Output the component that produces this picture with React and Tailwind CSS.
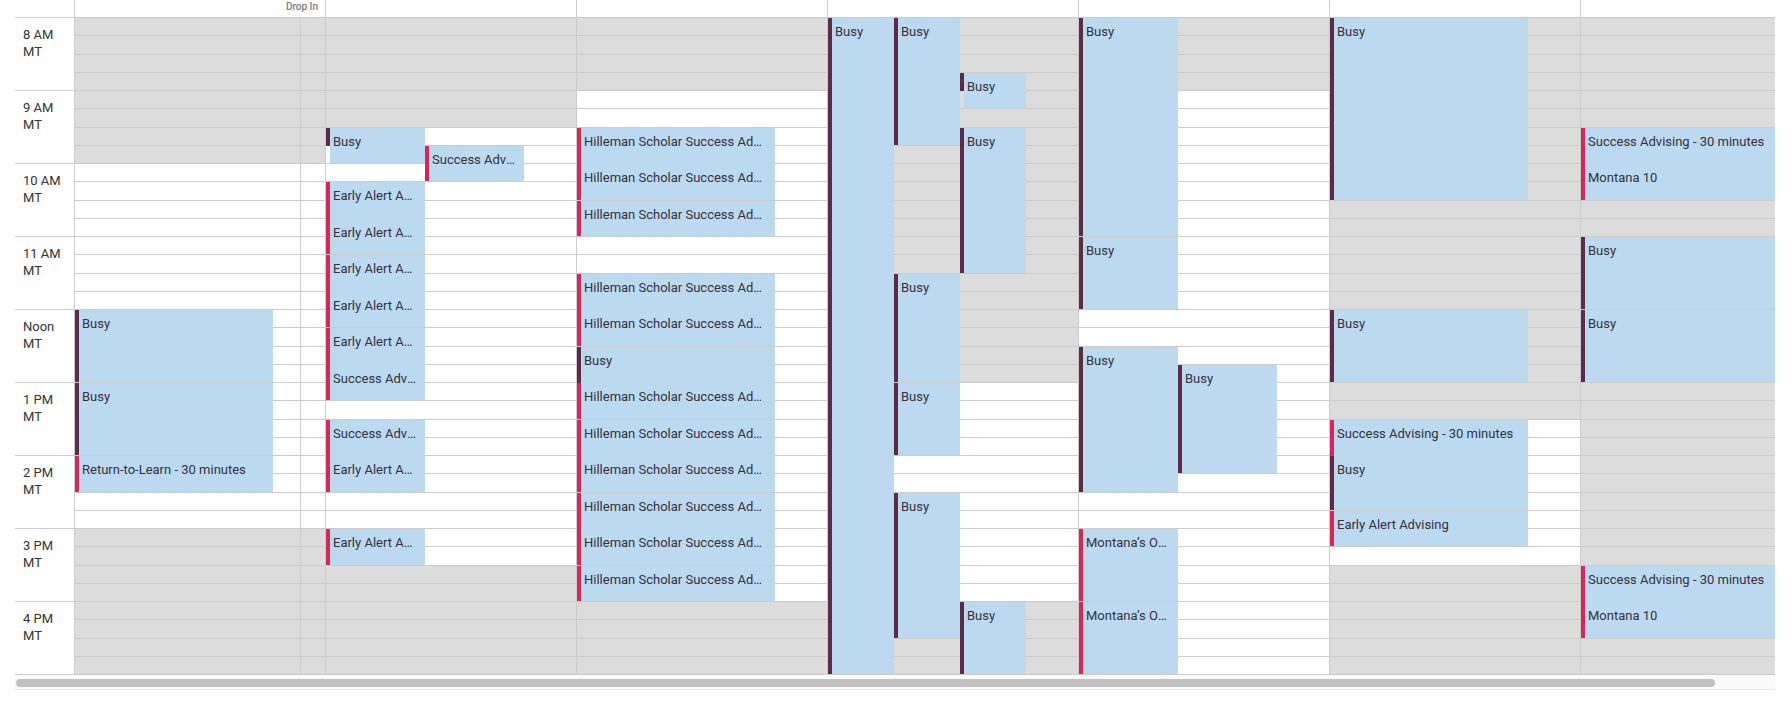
import React from 'react'

const SLOT = 18.25
const EVENT_W = 198
const SLOT_COUNT = 36

const hours = ['8 AM', '9 AM', '10 AM', '11 AM', 'Noon', '1 PM', '2 PM', '3 PM', '4 PM']

const HILLEMAN = 'Hilleman Scholar Success Advising'
const EARLY = 'Early Alert Advising'
const SUCCESS = 'Success Advising - 30 minutes'
const MONTANA_OH = 'Montana’s Office Hours'

// a segment is one appointment inside a block; n = length in 15 min slots
const busy = (n, bar) => ({ title: 'Busy', kind: 'busy', n, bar })
const appt = (title, n) => ({ title, kind: 'appt', n })
const ev = (s, e, segs, lane = 0, lanes = 1) => ({ s, e, segs, lane, lanes })

const days = [
  {
    gray: [[0, 8], [28, 36]],
    dropIn: true,
    events: [
      ev(16, 20, [busy(4)]),
      ev(20, 24, [busy(4)]),
      ev(24, 26, [appt('Return-to-Learn - 30 minutes', 2)]),
    ],
  },
  {
    gray: [[0, 6], [30, 36]],
    events: [
      ev(6, 8, [busy(2, 1)], 0, 2),
      ev(7, 9, [appt(SUCCESS, 2)], 1, 2),
      ev(9, 13, [appt(EARLY, 2), appt(EARLY, 2)], 0, 2),
      ev(13, 17, [appt(EARLY, 2), appt(EARLY, 2)], 0, 2),
      ev(17, 21, [appt(EARLY, 2), appt(SUCCESS, 2)], 0, 2),
      ev(22, 26, [appt(SUCCESS, 2), appt(EARLY, 2)], 0, 2),
      ev(28, 30, [appt(EARLY, 2)], 0, 2),
    ],
  },
  {
    gray: [[0, 4], [32, 36]],
    events: [
      ev(6, 10, [appt(HILLEMAN, 2), appt(HILLEMAN, 2)]),
      ev(10, 12, [appt(HILLEMAN, 2)]),
      ev(14, 18, [appt(HILLEMAN, 2), appt(HILLEMAN, 2)]),
      ev(18, 22, [busy(2), appt(HILLEMAN, 2)]),
      ev(22, 26, [appt(HILLEMAN, 2), appt(HILLEMAN, 2)]),
      ev(26, 30, [appt(HILLEMAN, 2), appt(HILLEMAN, 2)]),
      ev(30, 32, [appt(HILLEMAN, 2)]),
    ],
  },
  {
    gray: [[0, 20], [32, 36]],
    events: [
      ev(0, 36, [busy(36)], 0, 3),
      ev(0, 7, [busy(7)], 1, 3),
      ev(3, 5, [busy(2, 1)], 2, 3),
      ev(6, 14, [busy(8)], 2, 3),
      ev(14, 20, [busy(6)], 1, 3),
      ev(20, 24, [busy(4)], 1, 3),
      ev(26, 34, [busy(8)], 1, 3),
      ev(32, 36, [busy(4)], 2, 3),
    ],
  },
  {
    gray: [[0, 4]],
    events: [
      ev(0, 12, [busy(12)], 0, 2),
      ev(12, 16, [busy(4)], 0, 2),
      ev(18, 26, [busy(8)], 0, 2),
      ev(19, 25, [busy(6)], 1, 2),
      ev(28, 32, [appt(MONTANA_OH, 4)], 0, 2),
      ev(32, 36, [appt(MONTANA_OH, 4)], 0, 2),
    ],
  },
  {
    gray: [[0, 22], [30, 36]],
    events: [
      ev(0, 10, [busy(10)]),
      ev(16, 20, [busy(4)]),
      ev(22, 27, [appt(SUCCESS, 2), busy(3)]),
      ev(27, 29, [appt(EARLY, 2)]),
    ],
  },
  {
    gray: [[0, 36]],
    events: [
      ev(6, 10, [appt(SUCCESS, 2), appt('Montana 10', 2)]),
      ev(12, 16, [busy(4)]),
      ev(16, 20, [busy(4)]),
      ev(30, 34, [appt(SUCCESS, 2), appt('Montana 10', 2)]),
    ],
  },
]

const slots = Array.from({ length: SLOT_COUNT }, (_, i) => i)
const inRanges = (ranges, i) => ranges.some(([a, b]) => i >= a && i < b)

const SlotColumn = ({ gray, className = '' }) => (
  <div className={`flex flex-col ${className}`}>
    {slots.map((i) => (
      <div
        key={i}
        className={`h-[18.25px] shrink-0 border-b border-[#cbcbcb] ${inRanges(gray, i) ? 'bg-[#dcdcdc]' : 'bg-white'}`}
      />
    ))}
  </div>
)

const EventBlock = ({ event }) => {
  const laneW = EVENT_W / event.lanes
  return (
    <div
      className="absolute flex overflow-hidden"
      style={{
        top: event.s * SLOT,
        left: event.lane * laneW,
        width: laneW,
        height: (event.e - event.s) * SLOT - 1,
      }}
    >
      <div className="w-1 shrink-0 flex flex-col">
        {event.segs.map((seg, i) => (
          <div key={i} className="shrink-0" style={{ height: seg.n * SLOT }}>
            <div
              className={seg.kind === 'busy' ? 'bg-[#5d2a47]' : 'bg-[#d6265a]'}
              style={{ height: (seg.bar ?? seg.n) * SLOT }}
            />
          </div>
        ))}
      </div>
      <div className="flex-1 min-w-0 flex flex-col bg-[#bcdaef]">
        {event.segs.map((seg, i) => (
          <div key={i} className="shrink-0 pl-[3px] pr-[7px] pt-[5px]" style={{ height: seg.n * SLOT }}>
            <div className="truncate text-[13px] leading-[17px] text-[#34313a]">{seg.title}</div>
          </div>
        ))}
      </div>
    </div>
  )
}

const DayColumn = ({ day }) => (
  <div className="w-[251px] shrink-0 flex flex-col border-r border-[#cbcbcb]">
    <div className="h-[18px] shrink-0 border-b border-[#cbcbcb] flex justify-end pr-[7px]">
      {day.dropIn && (
        <span className="text-[10px] leading-[13px] font-medium text-[#7b7b7b]">Drop In</span>
      )}
    </div>
    <div className="relative flex">
      <SlotColumn gray={day.gray} className="flex-1" />
      {day.dropIn && <SlotColumn gray={day.gray} className="w-[25px] border-l border-[#cbcbcb]" />}
      {day.events.map((event, i) => (
        <EventBlock key={i} event={event} />
      ))}
    </div>
  </div>
)

const TimeGutter = () => (
  <div className="w-[60px] shrink-0 flex flex-col border-r border-[#cbcbcb]">
    <div className="h-[18px] shrink-0 border-b border-[#cbcbcb]" />
    {hours.map((h) => (
      <div
        key={h}
        className="h-[73px] shrink-0 border-b border-[#cbcbcb] pl-2 pt-[8px] text-[13px] leading-[17px] text-[#333333]"
      >
        <div>{h}</div>
        <div>MT</div>
      </div>
    ))}
  </div>
)

export default function App() {
  return (
    <div className="min-h-[705px] bg-white font-['Roboto',sans-serif]">
      <div className="ml-[15px] w-[1760px] overflow-hidden">
        <div className="flex w-max">
          <TimeGutter />
          {days.map((day, i) => (
            <DayColumn key={i} day={day} />
          ))}
        </div>
        {/* horizontal scroll track */}
        <div className="h-[15px] bg-[#fafafa] border-b border-[#e6e6e6] pt-[4px] pl-px">
          <div className="h-2 w-[1699px] rounded-full bg-[#c1c1c1]" />
        </div>
      </div>
    </div>
  )
}
